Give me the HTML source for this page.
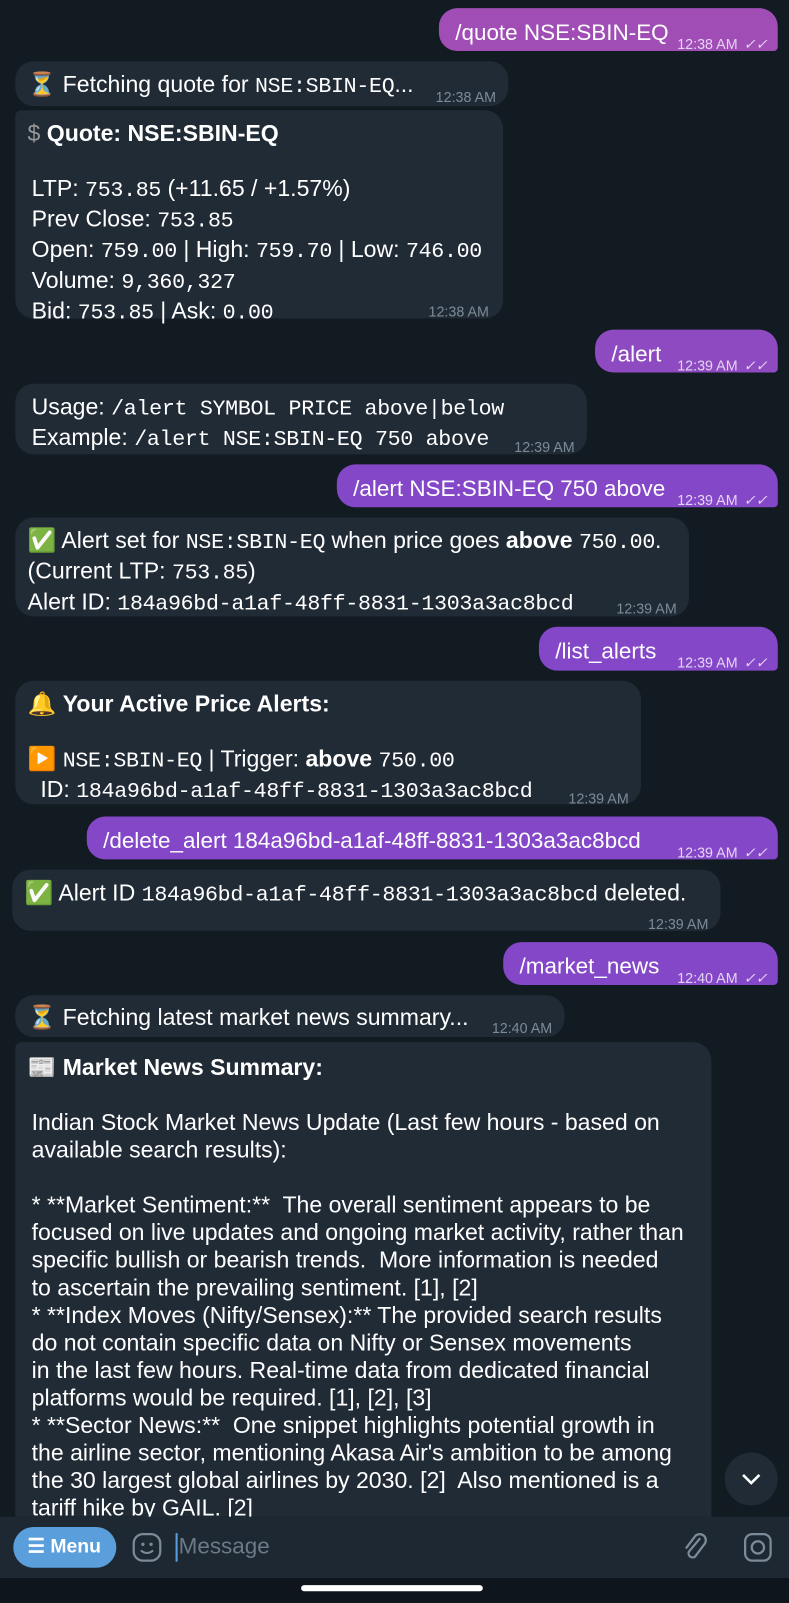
<!DOCTYPE html>
<html><head><meta charset="utf-8"><style>
*{margin:0;padding:0;box-sizing:border-box}
body{width:789px;height:1600px;background:#121a22;font-family:"Liberation Sans",sans-serif;color:#fff;position:relative;overflow:hidden}
#w{position:absolute;left:0;top:0;width:773px;height:1568px;transform:scale(1.0207);transform-origin:0 0}
.b{position:absolute;border-radius:18px;font-size:22.6px;line-height:27px;padding:0 14px;white-space:nowrap}
.in{background:#202b36;border-radius:18px}
.out{background:#8447c8;border-radius:18px 18px 4px 18px;font-size:22px}
.m{font-family:"Liberation Mono",monospace;font-size:21.2px;letter-spacing:-0.3px}
.t{position:absolute;font-size:14px;color:#7d8b98;right:12px}
.out .t{color:#e4d4f4;right:10px}
.ck{font-size:14px;margin-left:2px;font-style:italic}
.l{position:absolute;left:16px}
</style></head><body><div id="w">

<div class="b out" style="left:430px;top:8px;width:332px;height:42px;background:#a04db6">
<div class="l" style="top:10px">/quote NSE:SBIN-EQ</div><div class="t" style="top:22px">12:38 AM <span class="ck">✓✓</span></div></div>

<div class="b in" style="left:15px;top:60px;width:483px;height:44px">
<div class="l" style="top:9px;left:12px">⏳ Fetching quote for <span class="m">NSE:SBIN-EQ</span>...</div><div class="t" style="top:22px">12:38 AM</div></div>

<div class="b in" style="left:15px;top:108px;width:478px;height:204px;border-radius:6px 18px 18px 18px">
<div class="l" style="top:9px;left:12px"><span style="color:#999">$</span> <b>Quote: NSE:SBIN-EQ</b></div>
<div class="l" style="top:63px">LTP: <span class="m">753.85</span> (+11.65 / +1.57%)<br>Prev Close: <span class="m">753.85</span><br>Open: <span class="m">759.00</span> | High: <span class="m">759.70</span> | Low: <span class="m">746.00</span><br>Volume: <span class="m">9,360,327</span><br>Bid: <span class="m">753.85</span> | Ask: <span class="m">0.00</span></div>
<div class="t" style="top:184px;right:14px">12:38 AM</div></div>

<div class="b out" style="left:583px;top:323px;width:179px;height:42px;background:#8e4ac0">
<div class="l" style="top:10px">/alert</div><div class="t" style="top:22px">12:39 AM <span class="ck">✓✓</span></div></div>

<div class="b in" style="left:15px;top:376px;width:560px;height:69px">
<div class="l" style="top:9px">Usage: <span class="m">/alert SYMBOL PRICE above|below</span><br>Example: <span class="m">/alert NSE:SBIN-EQ 750 above</span></div>
<div class="t" style="top:49px">12:39 AM</div></div>

<div class="b out" style="left:330px;top:455px;width:432px;height:42px">
<div class="l" style="top:10px">/alert NSE:SBIN-EQ 750 above</div><div class="t" style="top:22px">12:39 AM <span class="ck">✓✓</span></div></div>

<div class="b in" style="left:15px;top:507px;width:660px;height:97px">
<div class="l" style="top:9px;left:12px">✅ Alert set for <span class="m">NSE:SBIN-EQ</span> when price goes <b>above</b> <span class="m">750.00</span>.<br>(Current LTP: <span class="m">753.85</span>)<br>Alert ID: <span class="m">184a96bd-a1af-48ff-8831-1303a3ac8bcd</span></div>
<div class="t" style="top:76px">12:39 AM</div></div>

<div class="b out" style="left:528px;top:614px;width:234px;height:43px">
<div class="l" style="top:10px">/list_alerts</div><div class="t" style="top:22px">12:39 AM <span class="ck">✓✓</span></div></div>

<div class="b in" style="left:15px;top:667px;width:613px;height:121px">
<div class="l" style="top:9px;left:12px">🔔 <b>Your Active Price Alerts:</b></div>
<div class="l" style="top:63px;left:12px">▶️ <span class="m">NSE:SBIN-EQ</span> | Trigger: <b>above</b> <span class="m">750.00</span><br>&nbsp;&nbsp;ID: <span class="m">184a96bd-a1af-48ff-8831-1303a3ac8bcd</span></div>
<div class="t" style="top:102px">12:39 AM</div></div>

<div class="b out" style="left:85px;top:800px;width:677px;height:42px">
<div class="l" style="top:10px">/delete_alert 184a96bd-a1af-48ff-8831-1303a3ac8bcd</div><div class="t" style="top:22px">12:39 AM <span class="ck">✓✓</span></div></div>

<div class="b in" style="left:12px;top:852px;width:694px;height:60px">
<div class="l" style="top:9px;left:12px">✅ Alert ID <span class="m">184a96bd-a1af-48ff-8831-1303a3ac8bcd</span> deleted.</div>
<div class="t" style="top:40px">12:39 AM</div></div>

<div class="b out" style="left:493px;top:923px;width:269px;height:42px">
<div class="l" style="top:10px">/market_news</div><div class="t" style="top:22px">12:40 AM <span class="ck">✓✓</span></div></div>

<div class="b in" style="left:15px;top:975px;width:538px;height:41px">
<div class="l" style="top:8px;left:12px">⏳ Fetching latest market news summary...</div><div class="t" style="top:19px">12:40 AM</div></div>

<div class="b in" style="left:15px;top:1021px;width:682px;height:490px;border-radius:6px 18px 0 0">
<div class="l" style="top:11px;left:12px">📰 <b>Market News Summary:</b></div>
<div class="l" style="top:65px">Indian Stock Market News Update (Last few hours - based on<br>available search results):<br><br>* **Market Sentiment:**&nbsp; The overall sentiment appears to be<br>focused on live updates and ongoing market activity, rather than<br>specific bullish or bearish trends.&nbsp; More information is needed<br>to ascertain the prevailing sentiment. [1], [2]<br>* **Index Moves (Nifty/Sensex):** The provided search results<br>do not contain specific data on Nifty or Sensex movements<br>in the last few hours. Real-time data from dedicated financial<br>platforms would be required. [1], [2], [3]<br>* **Sector News:**&nbsp; One snippet highlights potential growth in<br>the airline sector, mentioning Akasa Air's ambition to be among<br>the 30 largest global airlines by 2030. [2]&nbsp; Also mentioned is a<br>tariff hike by GAIL. [2]</div></div>

<div style="position:absolute;left:710px;top:1423px;width:52px;height:52px;border-radius:50%;background:#202b36">
<svg width="52" height="52"><path d="M18 22 L26 30 L34 22" stroke="#fff" stroke-width="2.5" fill="none"/></svg></div>

<div style="position:absolute;left:0;top:1486px;width:773px;height:84px;background:#0e151c"></div>
<div style="position:absolute;left:0;top:1486px;width:773px;height:60px;background:#1d2833"></div>
<div style="position:absolute;left:13px;top:1496px;width:101px;height:40px;border-radius:20px;background:#5a9fdb;font-size:19px;line-height:40px;padding-left:14px;font-weight:bold">☰ Menu</div>
<svg style="position:absolute;left:128px;top:1500px" width="32" height="32"><rect x="3" y="3" width="26" height="26" rx="9" fill="none" stroke="#7d8b98" stroke-width="2.2"/><circle cx="12" cy="13" r="1.6" fill="#7d8b98"/><circle cx="20" cy="13" r="1.6" fill="#7d8b98"/><path d="M10 19 Q16 24 22 19" stroke="#7d8b98" stroke-width="2" fill="none"/></svg>
<div style="position:absolute;left:172px;top:1502px;width:2px;height:28px;background:#5a9fdb"></div>
<div style="position:absolute;left:175px;top:1502px;font-size:22px;color:#6c7a87">Message</div>
<svg style="position:absolute;left:666px;top:1499px" width="30" height="34"><path d="M20 8 L9 21 a4 4 0 0 0 6 5 L24 14 a6 6 0 0 0 -9 -8 L6 18" stroke="#7d8b98" stroke-width="2.2" fill="none"/></svg>
<svg style="position:absolute;left:728px;top:1501px" width="30" height="30"><rect x="2" y="2" width="25" height="26" rx="7" fill="none" stroke="#7d8b98" stroke-width="2.2"/><circle cx="14.5" cy="15" r="6" fill="none" stroke="#7d8b98" stroke-width="2.2"/></svg>
<div style="position:absolute;left:295px;top:1553px;width:178px;height:6px;border-radius:3px;background:#fff"></div>
</div></body></html>
